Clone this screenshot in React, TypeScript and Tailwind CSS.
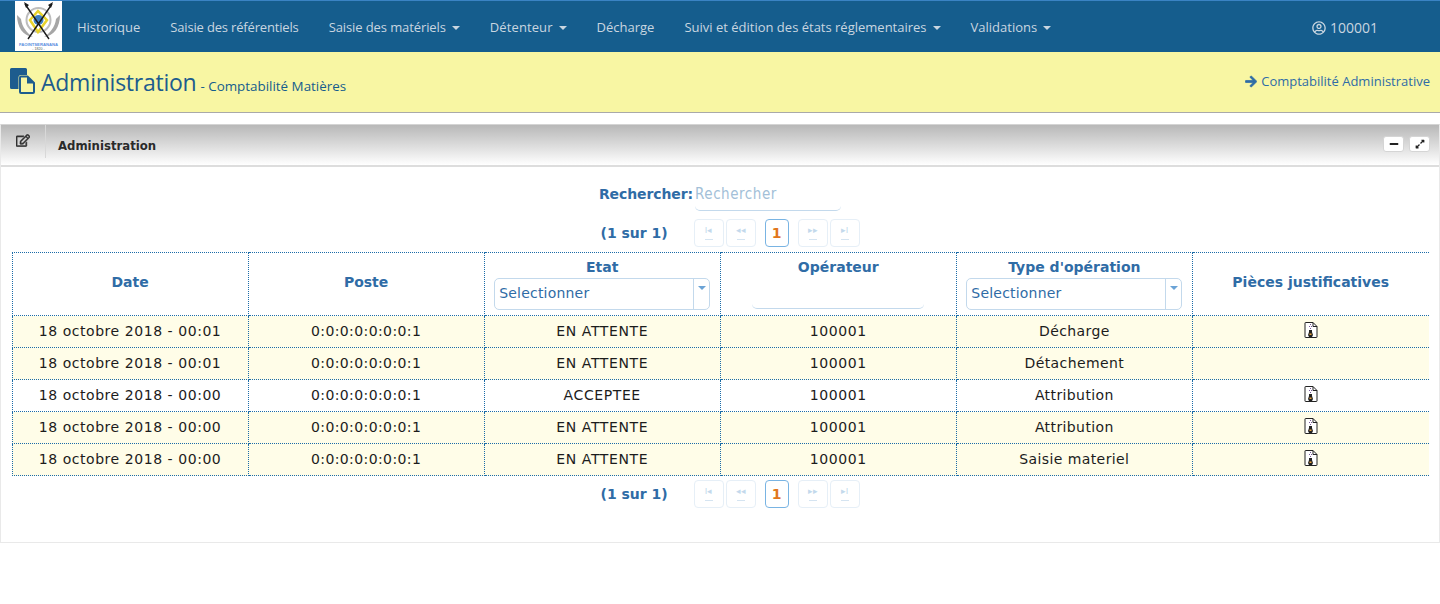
import { FaRegEdit, FaArrowRight, FaRegUserCircle, FaMinus, FaExpandAlt } from "react-icons/fa";

const NAV: [string, boolean, string][] = [
  ["Historique", false, ""],
  ["Saisie des référentiels", false, "tracking-[-0.17px]"],
  ["Saisie des matériels", true, "tracking-[-0.1px]"],
  ["Détenteur", true, "tracking-[0.1px]"],
  ["Décharge", false, ""],
  ["Suivi et édition des états réglementaires", true, ""],
  ["Validations", true, ""],
];

const ROWS: [string, string, string, string, boolean, boolean][] = [
  ["18 octobre 2018 - 00:01", "EN ATTENTE", "100001", "Décharge", true, true],
  ["18 octobre 2018 - 00:01", "EN ATTENTE", "100001", "Détachement", false, true],
  ["18 octobre 2018 - 00:00", "ACCEPTEE", "100001", "Attribution", true, false],
  ["18 octobre 2018 - 00:00", "EN ATTENTE", "100001", "Attribution", true, true],
  ["18 octobre 2018 - 00:00", "EN ATTENTE", "100001", "Saisie materiel", true, true],
];

function Logo() {
  return (
    <svg viewBox="0 0 47 50" className="w-[47px] h-[50px] bg-white shrink-0">
      <path d="M2 14c0 12 6 21 16 22-6-4-11-10-12-18zM45 14c0 12-6 21-16 22 6-4 11-10 12-18z" fill="#a6a6a6" />
      <circle cx="23.5" cy="19" r="12" fill="none" stroke="#bdbdbd" strokeWidth="2" />
      <path d="M15 19l8-9 9 9-9 12z" fill="none" stroke="#e8d32c" strokeWidth="2.5" />
      <circle cx="23.5" cy="19" r="5" fill="#3d7fc0" />
      <path d="M10 3l24 35M37 3L13 38" stroke="#1b1b1b" strokeWidth="1.4" />
      <path d="M9 1l5 3-3 3zM38 1l-5 3 3 3z" fill="#1b1b1b" />
      <text x="23.5" y="44.5" textAnchor="middle" fontSize="4.2" fontWeight="700" fill="#5b8fe0" fontFamily="Liberation Sans, sans-serif">FAOINTSERANANA</text>
      <text x="23.5" y="49" textAnchor="middle" fontSize="3.6" fill="#555" fontFamily="Liberation Sans, sans-serif">- 1820 -</text>
    </svg>
  );
}

function Copy() {
  return (
    <svg viewBox="0 0 25 26" className="w-[25px] h-[26px]">
      <path d="M1.5 0h14a1.5 1.5 0 0 1 1.5 1.5V7h-6a2.5 2.5 0 0 0-2.5 2.5V21h-7A1.5 1.5 0 0 1 0 19.500v-18A1.500 1.500 0 0 1 1.500 0z" fill="#1d5c8e" />
      <path d="M11 8.500h6.500l6.500 6.500v9a1 1 0 0 1-1 1H11a1 1 0 0 1-1-1V9.500a1 1 0 0 1 1-1z" fill="#f8f6a3" stroke="#1d5c8e" strokeWidth="2" />
      <path d="M17 8.500V15.500h7z" fill="#1d5c8e" />
    </svg>
  );
}

function Zip() {
  return (
    <svg viewBox="0 0 14 16" className="w-[14px] h-[16px] inline-block align-[-2px]">
      <path d="M1.500.500h7.500l4 4v10.500a.5.5 0 0 1-.5.5h-11a.5.5 0 0 1-.5-.5V1a.5.5 0 0 1 .5-.5z" fill="#fff" stroke="#222" />
      <path d="M9 .5v4h4" fill="none" stroke="#222" />
      <path d="M6 2h1v1H6zM5 4h1v1H5zM7 4h1v1H7zM6 6h1v1H6z" fill="#7a5a9c" />
      <path d="M5 8h3v2l1 3-1 2H5l-1-2 1-3z" fill="#222" />
      <rect x="5.500" y="11.500" width="2" height="1.500" fill="#e9a23b" />
    </svg>
  );
}

function PageBtn({ glyph }: { glyph: string }) {
  return (
    <span className="w-[30px] h-[28px] rounded-[4px] border border-[#e6eff7] flex flex-col items-center pt-[4px] text-[9px] leading-[12px] text-[#c3d9ec] font-['Liberation_Sans',sans-serif]">
      <span>{glyph}</span>
      <span className="mt-[3px] w-[8px] h-px bg-[#d5e4f1]" />
    </span>
  );
}

function Paginator() {
  return (
    <div className="flex items-center h-[28px] ml-[20px]">
      <span className="w-[66px] mr-[27px] text-[14px] font-bold text-[#2f6ca6] whitespace-nowrap">(1 sur 1)</span>
      <div className="flex gap-[2px]">
        <PageBtn glyph="I◂" />
        <PageBtn glyph="◂◂" />
      </div>
      <span className="w-[24px] h-[28px] mx-[9px] rounded-[4px] border border-[#79b4e3] flex items-center justify-center text-[14px] font-bold text-[#e1761c]">1</span>
      <div className="flex gap-[2px]">
        <PageBtn glyph="▸▸" />
        <PageBtn glyph="▸I" />
      </div>
    </div>
  );
}

function Select() {
  return (
    <div className="mx-auto w-[216px] h-[32px] rounded-[5px] border border-[#c3d9ec] flex bg-white">
      <span className="flex-1 pl-[4px] text-left text-[14px] font-normal leading-[29px] text-[#2f6ca6] tracking-[0.2px]">Selectionner</span>
      <span className="w-[16px] border-l border-[#c3d9ec] flex justify-center pt-[7px]">
        <span className="w-0 h-0 border-x-[4px] border-x-transparent border-t-[4px] border-t-[#6ba3d6]" />
      </span>
    </div>
  );
}

const cell = "border border-dotted border-[#1b6ca8] text-center p-0";

export default function App() {
  return (
    <div className="min-h-[604px] bg-white font-['DejaVu_Sans',sans-serif]">
      <nav className="h-[52px] bg-[#155d8d] border-t border-[#3a83c4] flex pl-[15px] font-['Open_Sans',sans-serif] text-[13px] text-[#c9d6e0]">
        <Logo />
        <div className="flex items-center h-[51px] pl-[15px] pt-[2px] gap-[30px]">
          {NAV.map(([t, caret, track]) => (
            <span key={t} className={`flex items-center whitespace-nowrap ${track}`}>
              {t}
              {caret && <span className="ml-[6px] w-0 h-0 border-x-[4px] border-x-transparent border-t-[4px] border-t-[#c9d6e0]" />}
            </span>
          ))}
        </div>
        <div className="ml-auto flex items-center h-[51px] pt-[2px] pr-[62px] gap-[4px] text-[14px]">
          <FaRegUserCircle className="w-[14px] h-[14px]" />
          100001
        </div>
      </nav>

      <header className="h-[61px] bg-[#f8f6a3] border-b border-[#a9a9a9] flex items-start px-[10px] font-['Open_Sans',sans-serif]">
        <div className="mt-[16px]"><Copy /></div>
        <h1 className="ml-[6px] mt-[13px] text-[23px] leading-[34px] tracking-[-0.25px] text-[#1d5c8e]">Administration</h1>
        <span className="ml-[4px] mt-[24px] text-[13.4px] leading-[20px] text-[#155d8d]">- Comptabilité Matières</span>
        <span className="ml-auto mt-[19px] flex items-center gap-[4px] text-[13px] leading-[20px] text-[#2f6ca6]">
          <FaArrowRight className="w-[12px] h-[13px] text-[#2f6ca6] stroke-[#2f6ca6] stroke-[30px]" />
          Comptabilité Administrative
        </span>
      </header>

      <section className="mt-[11px] h-[419px] border border-[#e9e9e9] border-t-[#d4d4d4] flex flex-col">
        <div className="h-[40px] bg-gradient-to-b from-[#b8b8b8] to-[#ffffff] border-b-[2px] border-[#dddddd] box-content flex items-start shrink-0">
          <div className="w-[45px] h-[33px] border-r border-[#d8d8d8] flex justify-center pt-[9px]">
            <FaRegEdit className="w-[14px] h-[13px] text-[#333] stroke-[#333] stroke-[20px]" />
          </div>
          <span className="ml-[12px] mt-[12px] text-[13px] leading-[17px] font-bold text-[#2a2a2a] font-['DejaVu_Sans_Condensed','DejaVu_Sans',sans-serif]">Administration</span>
          <div className="ml-auto mr-[9px] mt-[11px] flex gap-[5px]">
            <span className="w-[21px] h-[16px] bg-white rounded-[3px] border border-[#d5d5d5] flex items-center justify-center"><FaMinus className="w-[10px] h-[10px] text-[#222]" /></span>
            <span className="w-[21px] h-[16px] bg-white rounded-[3px] border border-[#d5d5d5] flex items-center justify-center"><FaExpandAlt className="w-[10px] h-[10px] text-[#222]" /></span>
          </div>
        </div>

        <div className="flex flex-col items-center px-[11px]">
          <div className="h-[52px] flex items-start pt-[18px]">
            <span className="text-[14px] leading-[18px] font-bold text-[#2f6ca6] tracking-[-0.1px]">Rechercher:</span>
            <span className="ml-[2px] w-[146px] h-[26px] border-b border-[#c3d9ec] rounded-b-[5px] text-[15px] leading-[18px] tracking-[0.55px] text-[#a3bfd8] font-['DejaVu_Sans_Condensed','DejaVu_Sans',sans-serif]">Rechercher</span>
          </div>
          <Paginator />
          <table className="mt-[5px] w-[1417px] table-fixed border-collapse text-[14px] tracking-[0.4px] text-[#1c1c1c]">
            <thead className="text-[#2f6ca6] font-bold text-[14px] tracking-normal">
              <tr className="h-[63px]">
                <th className={`${cell} pb-[3px]`}>Date</th>
                <th className={`${cell} pb-[3px]`}>Poste</th>
                <th className={`${cell} align-top pt-[4px]`}><div className="h-[21px] leading-[20px]">Etat</div><Select /></th>
                <th className={`${cell} align-top pt-[4px]`}>
                  <div className="h-[22px] leading-[20px]">Opérateur</div>
                  <div className="mx-auto mt-[10px] w-[172px] h-[20px] border-b border-[#c3d9ec] rounded-b-[5px]" />
                </th>
                <th className={`${cell} align-top pt-[4px]`}><div className="h-[21px] leading-[20px]">Type d'opération</div><Select /></th>
                <th className={`${cell} border-r-0 pb-[3px]`}>Pièces justificatives</th>
              </tr>
            </thead>
            <tbody>
              {ROWS.map(([d, e, o, t, z, y], i) => (
                <tr key={i} className={`h-[32px] ${y ? "bg-[#fffde8]" : "bg-white"}`}>
                  <td className={`${cell} tracking-[0.55px]`}>{d}</td>
                  <td className={cell}>0:0:0:0:0:0:0:1</td>
                  <td className={`${cell} tracking-[0.6px]`}>{e}</td>
                  <td className={`${cell} tracking-[0.6px]`}>{o}</td>
                  <td className={cell}>{t}</td>
                  <td className={`${cell} border-r-0`}>{z && <Zip />}</td>
                </tr>
              ))}
            </tbody>
          </table>
          <div className="mt-[4px]"><Paginator /></div>
        </div>
      </section>
    </div>
  );
}
